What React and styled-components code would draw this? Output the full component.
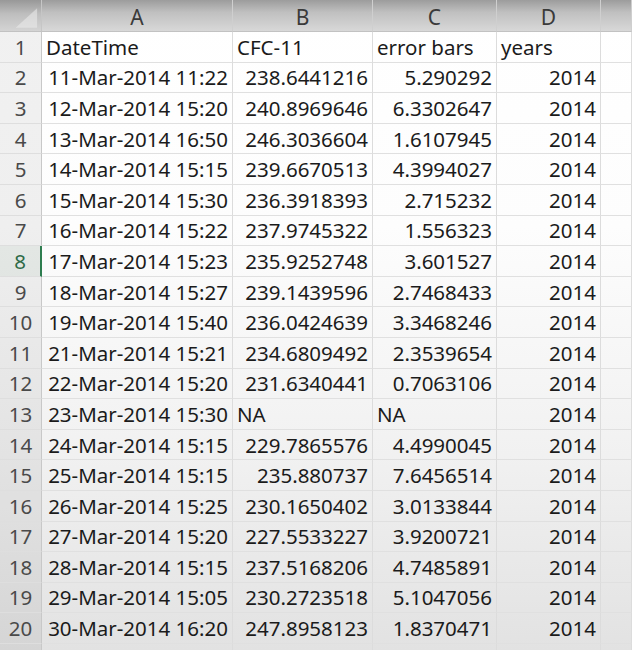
import styled, { createGlobalStyle } from "styled-components"

const rows = [
  ["DateTime", "CFC-11", "error bars", "years", true],
  ["11-Mar-2014 11:22", "238.6441216", "5.290292", "2014"],
  ["12-Mar-2014 15:20", "240.8969646", "6.3302647", "2014"],
  ["13-Mar-2014 16:50", "246.3036604", "1.6107945", "2014"],
  ["14-Mar-2014 15:15", "239.6670513", "4.3994027", "2014"],
  ["15-Mar-2014 15:30", "236.3918393", "2.715232", "2014"],
  ["16-Mar-2014 15:22", "237.9745322", "1.556323", "2014"],
  ["17-Mar-2014 15:23", "235.9252748", "3.601527", "2014"],
  ["18-Mar-2014 15:27", "239.1439596", "2.7468433", "2014"],
  ["19-Mar-2014 15:40", "236.0424639", "3.3468246", "2014"],
  ["21-Mar-2014 15:21", "234.6809492", "2.3539654", "2014"],
  ["22-Mar-2014 15:20", "231.6340441", "0.7063106", "2014"],
  ["23-Mar-2014 15:30", "NA", "NA", "2014"],
  ["24-Mar-2014 15:15", "229.7865576", "4.4990045", "2014"],
  ["25-Mar-2014 15:15", "235.880737", "7.6456514", "2014"],
  ["26-Mar-2014 15:25", "230.1650402", "3.0133844", "2014"],
  ["27-Mar-2014 15:20", "227.5533227", "3.9200721", "2014"],
  ["28-Mar-2014 15:15", "237.5168206", "4.7485891", "2014"],
  ["29-Mar-2014 15:05", "230.2723518", "5.1047056", "2014"],
  ["30-Mar-2014 16:20", "247.8958123", "1.8370471", "2014"],
]

export default function App(){
  return(
    <>
      <Global/>
      <Sheet>
        <Corner>
          <svg width="42" height="32" viewBox="0 0 42 32">
            <polygon points="38,8 38,28 16,28" fill="#ececec" opacity="0.55"/>
          </svg>
        </Corner>
        {["A","B","C","D",""].map((l, i) => <ColHead key={i}>{l}</ColHead>)}
        {rows.map((r, i) => {
          const n = i + 1
          const head = r[4]
          return [
            <RowHead key={"h"+n} $active={n === 8}>{n}</RowHead>,
            ...r.slice(0, 4).map((v, j) => (
              <Cell key={n+"-"+j} $left={head || v === "NA"}>{v}</Cell>
            )),
            <Cell key={n+"-e"}/>,
          ]
        })}
        {/* partly visible row below the last one */}
        <RowHead/>
        {[0,1,2,3,4].map(j => <Cell key={"x"+j}/>)}
      </Sheet>
    </>
  )
}

const Global = createGlobalStyle`
  html, body{
    margin: 0;
    padding: 0;
    overflow: hidden;
    background: #e6e6e6;
  }
  #root{
    width: 632px;
    height: 650px;
    overflow: hidden;
  }
`

const Sheet = styled.div`
  display: grid;
  grid-template-columns: 42px 191px 140px 124px 104px 1fr;
  grid-template-rows: 32px repeat(21, 30.6px);
  width: 632px;
  height: 650px;
  overflow: hidden;
  font-family: "Noto Sans", "Open Sans", sans-serif;
  background: linear-gradient(to bottom, #ffffff 0%, #fdfdfd 35%, #f1f1f1 70%, #e2e2e2 100%);
`

const Corner = styled.div`
  background: linear-gradient(to bottom, #989898 0%, #bebebe 45%, #d4d4d4 100%);
  border-right: 1px solid #c6c6c6;
  border-bottom: 1px solid #c2c2c2;
  display: flex;

  svg{ display: block; }
`

const ColHead = styled.div`
  background: linear-gradient(to bottom, #9c9c9c 0%, #c0c0c0 40%, #d8d8d8 100%);
  border-right: 1px solid #cfcfcf;
  border-bottom: 1px solid #c2c2c2;
  color: #3a3a3a;
  font-size: 21px;
  display: flex;
  align-items: center;
  justify-content: center;
  padding-top: 2px;
`

const RowHead = styled.div`
  background: ${p => p.$active ? "rgba(60,90,70,0.13)" : "rgba(0,0,0,0.055)"};
  border-right: ${p => p.$active ? "2px solid #2e7d4f" : "1px solid #c8c8c8"};
  border-bottom: 1px solid #dedede;
  color: ${p => p.$active ? "#2f6b48" : "#4a4a4a"};
  font-size: 20.5px;
  display: flex;
  align-items: center;
  justify-content: center;
`

const Cell = styled.div`
  border-right: 1px solid #dcdcdc;
  border-bottom: 1px solid #e0e0e0;
  color: #1b1b1b;
  font-size: 20.5px;
  white-space: nowrap;
  overflow: hidden;
  display: flex;
  align-items: center;
  justify-content: ${p => p.$left ? "flex-start" : "flex-end"};
  padding: 0 4px 0 4px;
`
